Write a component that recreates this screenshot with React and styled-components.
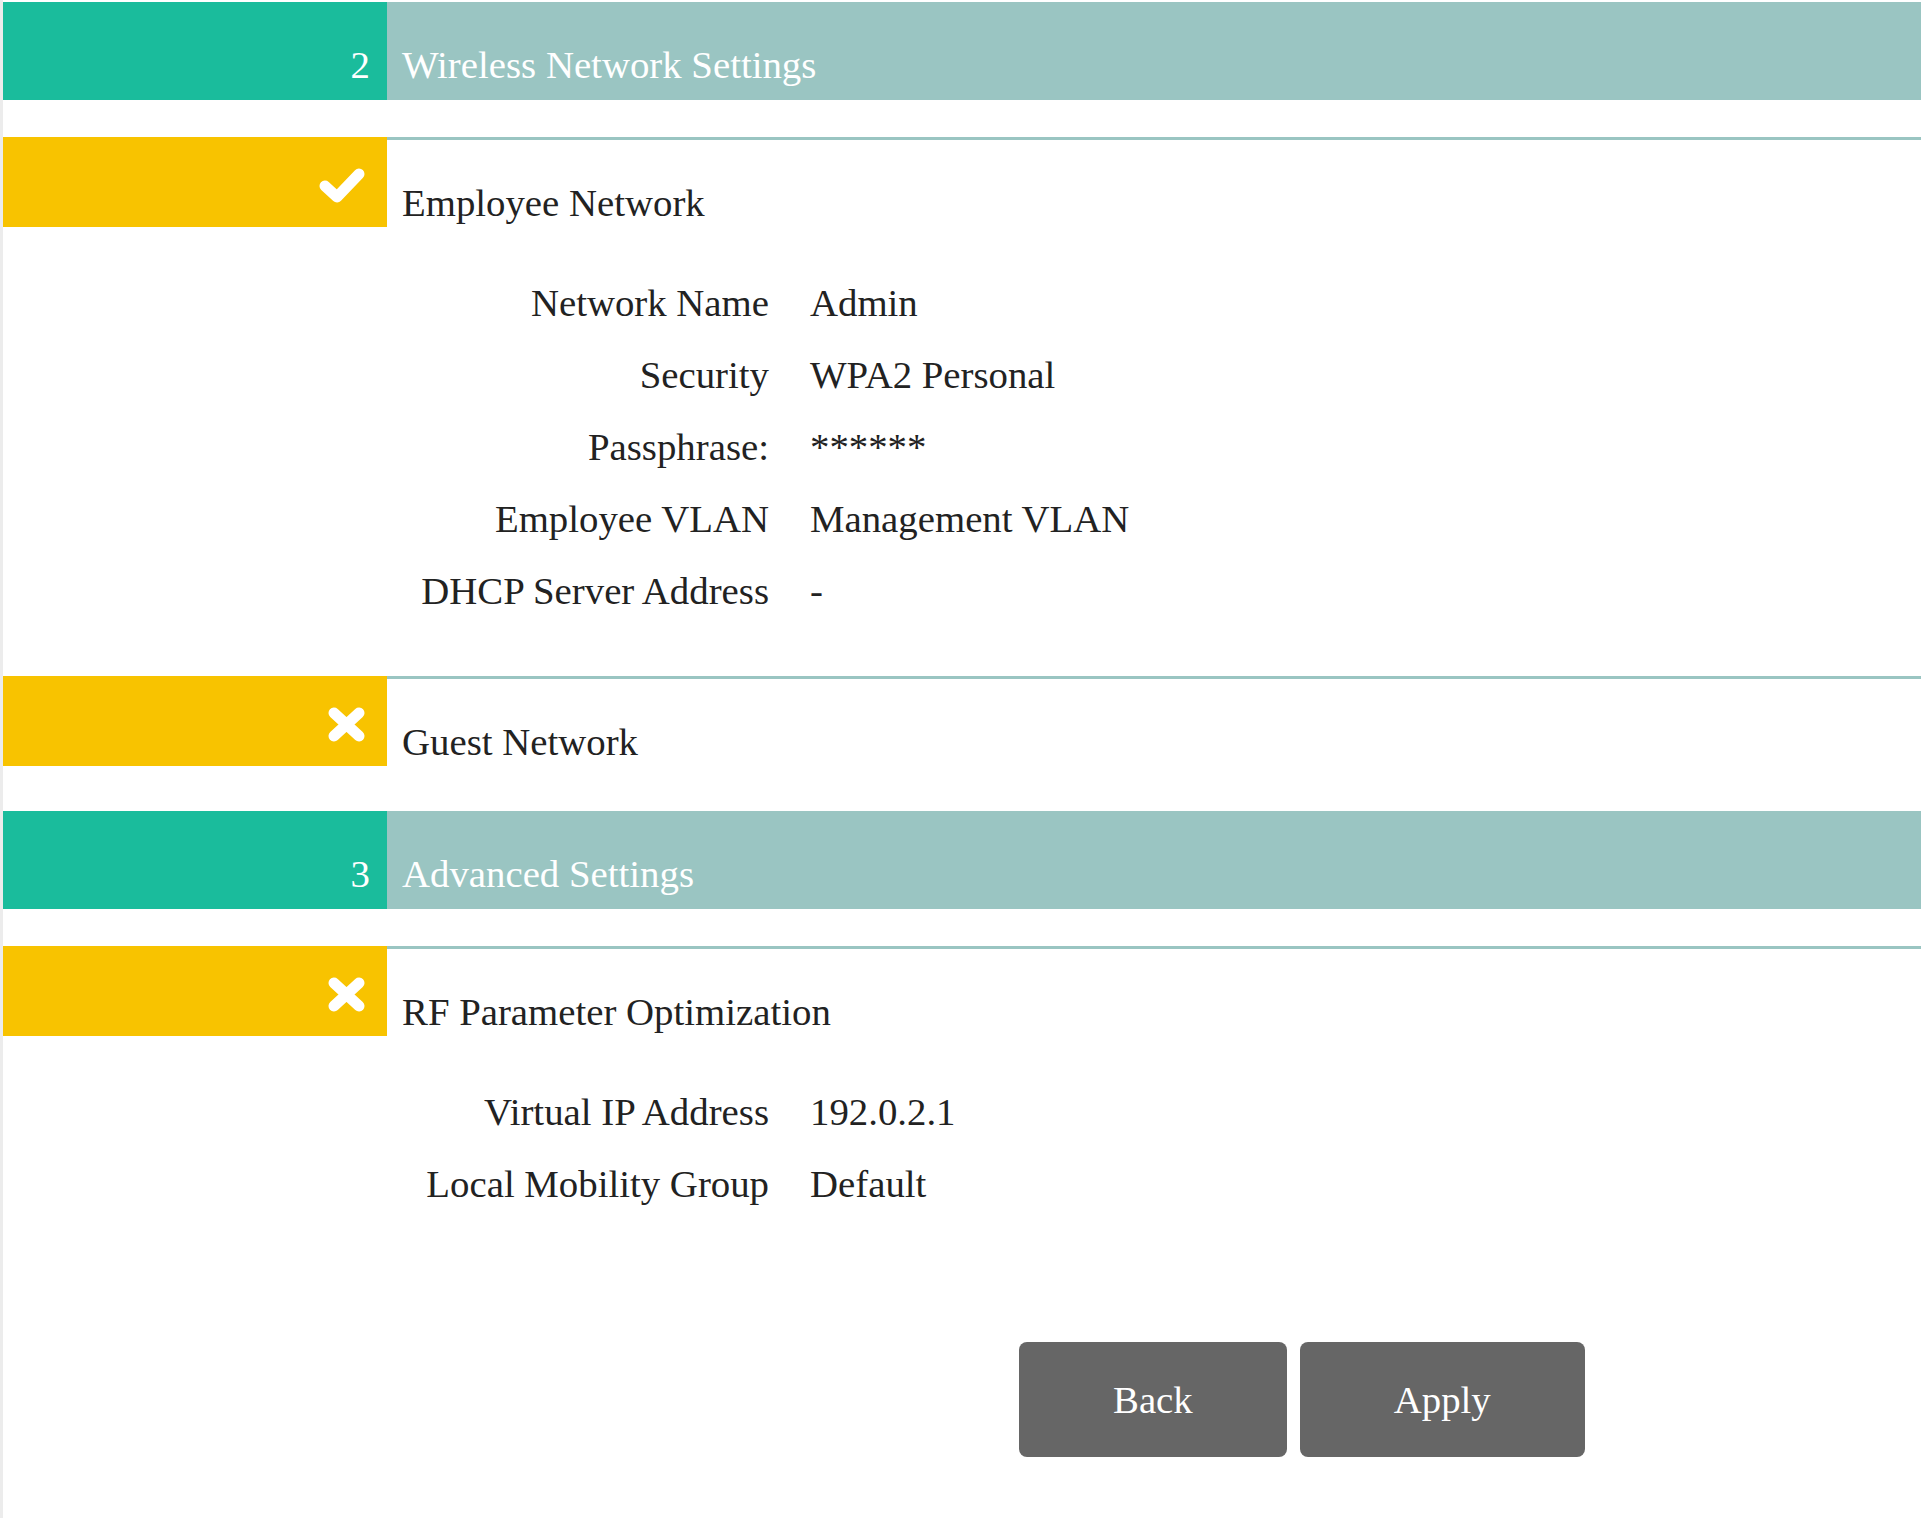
import styled, { createGlobalStyle } from "styled-components";

const GlobalStyle = createGlobalStyle`
body {
  margin: 0;
  background: #ececec;
  font-family: "Liberation Serif", "Times New Roman", serif;
}
`

const steps = [
  {
    number: 2,
    title: "Wireless Network Settings",
    items: [
      {
        name: "Employee Network",
        enabled: true,
        details: [
          ["Network Name", "Admin"],
          ["Security", "WPA2 Personal"],
          ["Passphrase:", "******"],
          ["Employee VLAN", "Management VLAN"],
          ["DHCP Server Address", "-"],
        ],
      },
      { name: "Guest Network", enabled: false, details: [] },
    ],
  },
  {
    number: 3,
    title: "Advanced Settings",
    items: [
      {
        name: "RF Parameter Optimization",
        enabled: false,
        details: [
          ["Virtual IP Address", "192.0.2.1"],
          ["Local Mobility Group", "Default"],
        ],
      },
    ],
  },
];

function CheckIcon(){
    return(
    <svg width="46" height="35" viewBox="0 0 46 35">
        <polyline points="6,18 18,29 40,6" fill="none" stroke="#fff" strokeWidth="11" strokeLinecap="round" strokeLinejoin="round"/>
    </svg>);
}

function CrossIcon(){
    return(
    <svg width="37" height="35" viewBox="0 0 37 35">
        <path d="M6 6 L31 29 M31 6 L6 29" fill="none" stroke="#fff" strokeWidth="11" strokeLinecap="round"/>
    </svg>);
}

export default function App(){
    return(
    <Page>
        <GlobalStyle/>
        {steps.map((step) => (
        <div key={step.number}>
            <StepHeader>
                <StepNumber>{step.number}</StepNumber>
                <StepTitle>{step.title}</StepTitle>
            </StepHeader>

            {step.items.map((item) => (
            <Item key={item.name} $empty={item.details.length === 0}>
                <ItemHeader>
                    <StatusCell>
                        {item.enabled ? <CheckIcon/> : <CrossIcon/>}
                    </StatusCell>
                    <ItemTitle>{item.name}</ItemTitle>
                </ItemHeader>

                {item.details.length > 0 && (
                <DetailGrid>
                    {item.details.map(([label, value]) => (
                    <Row key={label}>
                        <Label>{label}</Label>
                        <Value>{value}</Value>
                    </Row>
                    ))}
                </DetailGrid>
                )}
            </Item>
            ))}
        </div>
        ))}

        <ButtonBar>
            <Button>Back</Button>
            <Button>Apply</Button>
        </ButtonBar>
    </Page>);
}

const Page = styled.div`
margin-left: 3px;
min-height: 100vh;
background: #fff;
padding-top: 2px;
box-sizing: border-box;
overflow: hidden;
`

const StepHeader = styled.div`
display: flex;
height: 98px;
margin-bottom: 37px;
color: #fff;
font-size: 38.8px;
`

const StepNumber = styled.div`
width: 384px;
box-sizing: border-box;
background: #1abc9c;
display: flex;
justify-content: flex-end;
align-items: flex-end;
padding: 0 17px 13px 0;
`

const StepTitle = styled.div`
flex: 1;
background: #9ac5c2;
display: flex;
align-items: flex-end;
padding: 0 0 13px 15px;
`

const Item = styled.div`
padding-bottom: ${(props) => (props.$empty ? "45px" : "0")};
`

const ItemHeader = styled.div`
display: flex;
height: 90px;
`

const StatusCell = styled.div`
width: 384px;
box-sizing: border-box;
background: #f8c300;
display: flex;
justify-content: flex-end;
align-items: center;
padding: 6px 22px 0 0;
`

const ItemTitle = styled.div`
flex: 1;
border-top: 3px solid #9ac5c2;
display: flex;
align-items: flex-end;
padding: 0 0 2px 15px;
color: #222;
font-size: 38.8px;
`

const DetailGrid = styled.div`
padding: 40px 0 49px 0;
color: #222;
font-size: 38.8px;
line-height: 72px;
`

const Row = styled.div`
display: grid;
grid-template-columns: 766px 1fr;
column-gap: 41px;
`

const Label = styled.div`
text-align: right;
`

const Value = styled.div`
text-align: left;
`

const ButtonBar = styled.div`
display: flex;
gap: 13px;
margin: 73px 0 0 1016px;
`

const Button = styled.div`
height: 115px;
padding: 0 94px;
display: flex;
align-items: center;
justify-content: center;
background: #666;
color: #fff;
border-radius: 8px;
font-size: 38.8px;
cursor: pointer;
`
